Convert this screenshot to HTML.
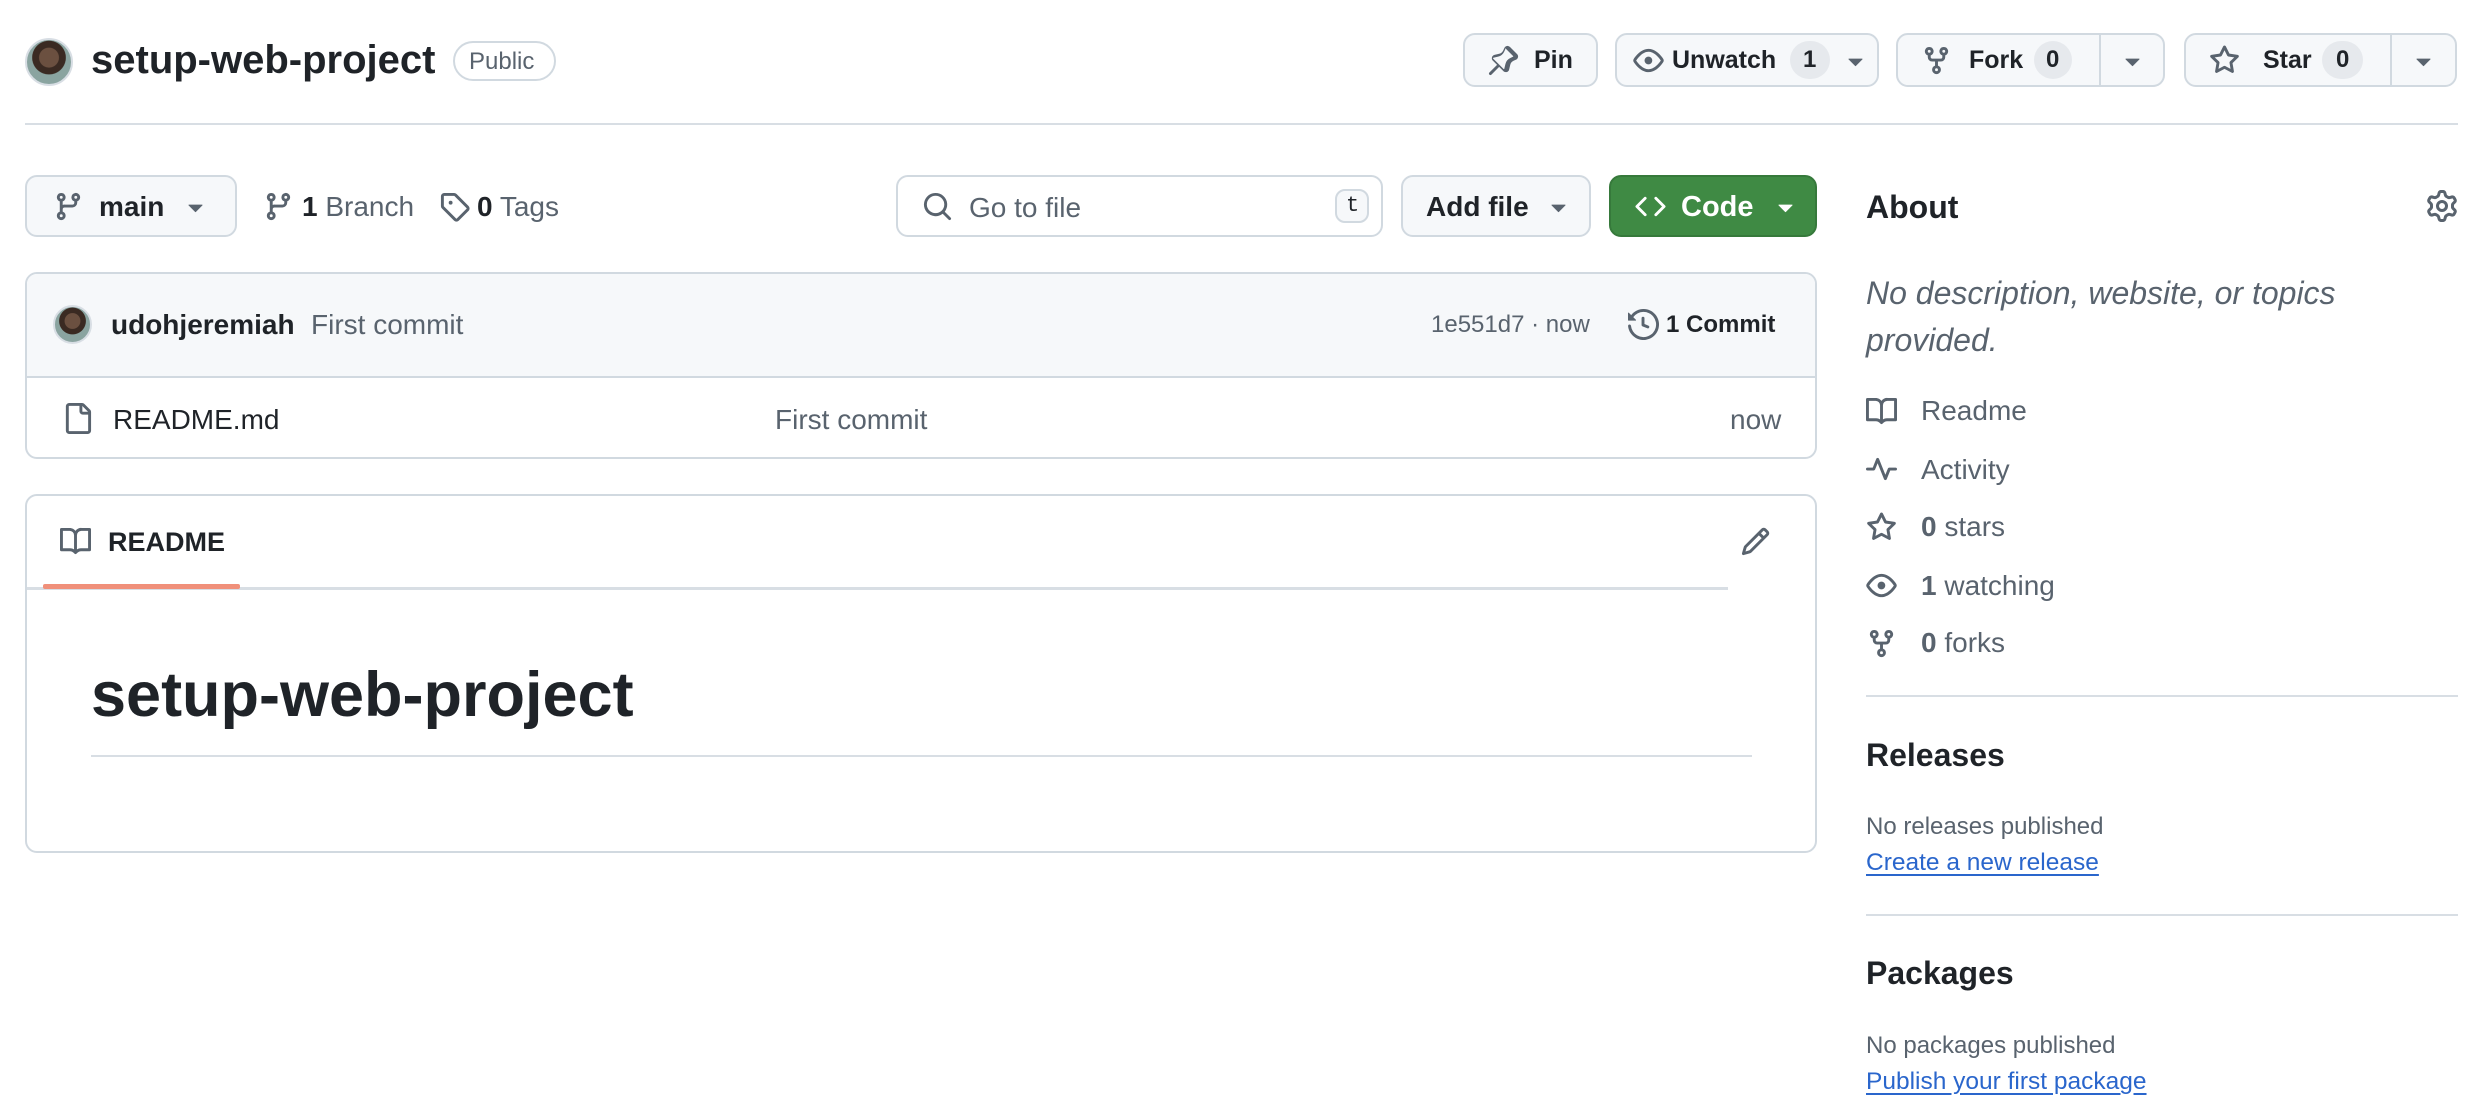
<!DOCTYPE html>
<html><head><meta charset="utf-8"><style>
*{box-sizing:border-box;margin:0;padding:0}
body{width:2490px;height:1118px;background:#fff;font-family:"Liberation Sans",Arial,sans-serif;color:#1f2328;position:relative;overflow:hidden}
.a{position:absolute}
.t{position:absolute;white-space:nowrap;line-height:1}
.btn{position:absolute;border:2px solid #d1d9e0;border-radius:12px;background:#f6f8fa}
svg.i{position:absolute;fill:#59636e}
.cnt{position:absolute;background:#e6e9ed;border-radius:20px;height:38px}
.hr{position:absolute;height:2px;background:#d8dee4}
.av{position:absolute;border-radius:50%;background:radial-gradient(circle at 50% 40%,#6b5040 0 28%,#3a2a22 30% 48%,#8aa4a0 50%);border:2px solid #d8dee4}
</style></head><body>

<div class="av" style="left:25px;top:38px;width:48px;height:48px"></div>
<div class="t" style="left:91px;top:40px;font-size:40px;font-weight:bold">setup-web-project</div>
<div class="a" style="left:453px;top:41px;width:103px;height:40px;border:2px solid #d1d9e0;border-radius:20px"></div>
<div class="t" style="left:469px;top:50px;font-size:24px;color:#59636e">Public</div>

<div class="btn" style="left:1463px;top:33px;width:135px;height:54px"></div>
<svg class="i" style="left:1488px;top:45px" width="31" height="31" viewBox="0 0 16 16"><path d="m11.294.984 3.722 3.722a1.75 1.75 0 0 1-.504 2.826l-1.327.613a3.089 3.089 0 0 0-1.707 2.084l-.584 2.454c-.317 1.332-1.972 1.8-2.94.832L5.750 11.311 1.78 15.28a.749.749 0 0 1-1.275-.326.749.749 0 0 1 .215-.734L4.69 10.25 2.487 8.047c-.968-.968-.5-2.623.832-2.94l2.454-.584a3.089 3.089 0 0 0 2.084-1.707l.613-1.327a1.75 1.75 0 0 1 2.824-.505Zm-2.35 1.17-.612 1.326a4.589 4.589 0 0 1-3.097 2.536l-2.454.584a.25.25 0 0 0-.119.42l5.33 5.33a.25.25 0 0 0 .42-.119l.584-2.454a4.589 4.589 0 0 1 2.536-3.097l1.326-.613a.25.25 0 0 0 .072-.404l-3.722-3.722a.25.25 0 0 0-.404.072Z"/></svg>
<div class="t" style="left:1534px;top:48px;font-size:25px;font-weight:bold">Pin</div>

<div class="btn" style="left:1615px;top:33px;width:264px;height:54px"></div>
<svg class="i" style="left:1633px;top:45px" width="31" height="31" viewBox="0 0 16 16"><path d="M8 2c1.981 0 3.671.992 4.933 2.078 1.27 1.091 2.187 2.345 2.637 3.023a1.62 1.62 0 0 1 0 1.798c-.45.678-1.367 1.932-2.637 3.023C11.67 13.008 9.981 14 8 14c-1.981 0-3.671-.992-4.933-2.078C1.797 10.83.88 9.576.43 8.898a1.62 1.62 0 0 1 0-1.798c.45-.677 1.367-1.931 2.637-3.022C4.33 2.992 6.019 2 8 2ZM1.679 7.932a.12.12 0 0 0 0 .136c.411.622 1.241 1.75 2.366 2.717C5.176 11.758 6.527 12.5 8 12.5c1.473 0 2.825-.742 3.955-1.715 1.124-.967 1.954-2.096 2.366-2.717a.12.12 0 0 0 0-.136c-.412-.621-1.242-1.75-2.366-2.717C10.824 4.242 9.473 3.5 8 3.5c-1.473 0-2.825.742-3.955 1.715-1.124.967-1.954 2.096-2.366 2.717ZM8 10a2 2 0 1 1-.001-3.999A2 2 0 0 1 8 10Z"/></svg>
<div class="t" style="left:1672px;top:48px;font-size:25px;font-weight:bold">Unwatch</div>
<div class="cnt" style="left:1790px;top:41px;width:40px"></div>
<div class="t" style="left:1803px;top:48px;font-size:24px;font-weight:bold">1</div>
<svg class="i" style="left:1840px;top:45px" width="31" height="31" viewBox="0 0 16 16"><path d="m4.427 7.427 3.396 3.396a.25.25 0 0 0 .354 0l3.396-3.396A.25.25 0 0 0 11.396 7H4.604a.25.25 0 0 0-.177.427Z"/></svg>

<div class="btn" style="left:1896px;top:33px;width:269px;height:54px"></div>
<div class="a" style="left:2099px;top:35px;width:2px;height:50px;background:#d1d9e0"></div>
<svg class="i" style="left:1921px;top:45px" width="31" height="31" viewBox="0 0 16 16"><path d="M5 5.372v.878c0 .414.336.75.75.75h4.5a.75.75 0 0 0 .75-.75v-.878a2.25 2.25 0 1 1 1.5 0v.878a2.25 2.25 0 0 1-2.25 2.25h-1.5v2.128a2.251 2.251 0 1 1-1.5 0V8.5h-1.5A2.25 2.25 0 0 1 3.5 6.25v-.878a2.25 2.25 0 1 1 1.5 0ZM5 3.25a.75.75 0 1 0-1.5 0 .75.75 0 0 0 1.5 0Zm6.75.75a.75.75 0 1 0 0-1.5.75.75 0 0 0 0 1.5Zm-3 8.75a.75.75 0 1 0-1.5 0 .75.75 0 0 0 1.5 0Z"/></svg>
<div class="t" style="left:1969px;top:48px;font-size:25px;font-weight:bold">Fork</div>
<div class="cnt" style="left:2034px;top:41px;width:38px"></div>
<div class="t" style="left:2046px;top:48px;font-size:24px;font-weight:bold">0</div>
<svg class="i" style="left:2117px;top:45px" width="31" height="31" viewBox="0 0 16 16"><path d="m4.427 7.427 3.396 3.396a.25.25 0 0 0 .354 0l3.396-3.396A.25.25 0 0 0 11.396 7H4.604a.25.25 0 0 0-.177.427Z"/></svg>

<div class="btn" style="left:2184px;top:33px;width:273px;height:54px"></div>
<div class="a" style="left:2390px;top:35px;width:2px;height:50px;background:#d1d9e0"></div>
<svg class="i" style="left:2209px;top:45px" width="31" height="31" viewBox="0 0 16 16"><path d="M8 .25a.75.75 0 0 1 .673.418l1.882 3.815 4.21.612a.75.75 0 0 1 .416 1.279l-3.046 2.97.719 4.192a.751.751 0 0 1-1.088.791L8 12.347l-3.766 1.98a.75.75 0 0 1-1.088-.79l.72-4.194L.818 6.374a.75.75 0 0 1 .416-1.28l4.21-.611L7.327.668A.75.75 0 0 1 8 .25Zm0 2.445L6.615 5.5a.75.75 0 0 1-.564.41l-3.097.45 2.24 2.184a.75.75 0 0 1 .216.664l-.528 3.084 2.769-1.456a.75.75 0 0 1 .698 0l2.77 1.456-.53-3.084a.75.75 0 0 1 .216-.664l2.24-2.183-3.096-.45a.75.75 0 0 1-.564-.41L8 2.694Z"/></svg>
<div class="t" style="left:2263px;top:48px;font-size:25px;font-weight:bold">Star</div>
<div class="cnt" style="left:2322px;top:41px;width:41px"></div>
<div class="t" style="left:2336px;top:48px;font-size:24px;font-weight:bold">0</div>
<svg class="i" style="left:2408px;top:45px" width="31" height="31" viewBox="0 0 16 16"><path d="m4.427 7.427 3.396 3.396a.25.25 0 0 0 .354 0l3.396-3.396A.25.25 0 0 0 11.396 7H4.604a.25.25 0 0 0-.177.427Z"/></svg>

<div class="hr" style="left:25px;top:123px;width:2433px"></div>

<div class="btn" style="left:25px;top:175px;width:212px;height:62px"></div>
<svg class="i" style="left:53px;top:191px" width="31" height="31" viewBox="0 0 16 16"><path d="M9.5 3.25a2.25 2.25 0 1 1 3 2.122V6A2.5 2.5 0 0 1 10 8.5H6a1 1 0 0 0-1 1v1.128a2.251 2.251 0 1 1-1.5 0V5.372a2.25 2.25 0 1 1 1.5 0v1.836A2.493 2.493 0 0 1 6 7h4a1 1 0 0 0 1-1v-.628A2.25 2.25 0 0 1 9.5 3.25Zm-6 0a.75.75 0 1 0 1.5 0 .75.75 0 0 0-1.5 0Zm8.25-.75a.75.75 0 1 0 0 1.5.75.75 0 0 0 0-1.5ZM4.25 12a.75.75 0 1 0 0 1.5.75.75 0 0 0 0-1.5Z"/></svg>
<div class="t" style="left:99px;top:193px;font-size:28px;font-weight:bold">main</div>
<svg class="i" style="left:180px;top:191px" width="31" height="31" viewBox="0 0 16 16"><path d="m4.427 7.427 3.396 3.396a.25.25 0 0 0 .354 0l3.396-3.396A.25.25 0 0 0 11.396 7H4.604a.25.25 0 0 0-.177.427Z"/></svg>

<svg class="i" style="left:263px;top:191px" width="31" height="31" viewBox="0 0 16 16"><path d="M9.5 3.25a2.25 2.25 0 1 1 3 2.122V6A2.5 2.5 0 0 1 10 8.5H6a1 1 0 0 0-1 1v1.128a2.251 2.251 0 1 1-1.5 0V5.372a2.25 2.25 0 1 1 1.5 0v1.836A2.493 2.493 0 0 1 6 7h4a1 1 0 0 0 1-1v-.628A2.25 2.25 0 0 1 9.5 3.25Zm-6 0a.75.75 0 1 0 1.5 0 .75.75 0 0 0-1.5 0Zm8.25-.75a.75.75 0 1 0 0 1.5.75.75 0 0 0 0-1.5ZM4.25 12a.75.75 0 1 0 0 1.5.75.75 0 0 0 0-1.5Z"/></svg>
<div class="t" style="left:302px;top:193px;font-size:28px;color:#59636e"><b style="color:#1f2328">1</b> Branch</div>
<svg class="i" style="left:439px;top:191px" width="31" height="31" viewBox="0 0 16 16"><path d="M1 7.775V2.75C1 1.784 1.784 1 2.75 1h5.025c.464 0 .91.184 1.238.513l6.25 6.25a1.75 1.75 0 0 1 0 2.474l-5.026 5.026a1.75 1.75 0 0 1-2.474 0l-6.25-6.25A1.752 1.752 0 0 1 1 7.775Zm1.5 0c0 .066.026.13.073.177l6.25 6.25a.25.25 0 0 0 .354 0l5.025-5.025a.25.25 0 0 0 0-.354l-6.25-6.25a.25.25 0 0 0-.177-.073H2.75a.25.25 0 0 0-.25.25ZM6 5a1 1 0 1 1 0 2 1 1 0 0 1 0-2Z"/></svg>
<div class="t" style="left:477px;top:193px;font-size:28px;color:#59636e"><b style="color:#1f2328">0</b> Tags</div>

<div class="a" style="left:896px;top:175px;width:487px;height:62px;border:2px solid #d1d9e0;border-radius:12px"></div>
<svg class="i" style="left:922px;top:191px" width="31" height="31" viewBox="0 0 16 16"><path d="M10.68 11.74a6 6 0 0 1-7.922-8.982 6 6 0 0 1 8.982 7.922l3.04 3.04a.749.749 0 0 1-.326 1.275.749.749 0 0 1-.734-.215ZM11.5 7a4.499 4.499 0 1 0-8.997 0A4.499 4.499 0 0 0 11.5 7Z"/></svg>
<div class="t" style="left:969px;top:194px;font-size:28px;color:#59636e">Go to file</div>
<div class="a" style="left:1335px;top:189px;width:34px;height:34px;border:2px solid #d1d9e0;border-radius:10px;background:#f6f8fa"></div>
<div class="t" style="left:1346px;top:195px;font-size:22px;font-family:'Liberation Mono',monospace;color:#1f2328">t</div>

<div class="btn" style="left:1401px;top:175px;width:190px;height:62px"></div>
<div class="t" style="left:1426px;top:193px;font-size:28px;font-weight:bold">Add file</div>
<svg class="i" style="left:1543px;top:191px" width="31" height="31" viewBox="0 0 16 16"><path d="m4.427 7.427 3.396 3.396a.25.25 0 0 0 .354 0l3.396-3.396A.25.25 0 0 0 11.396 7H4.604a.25.25 0 0 0-.177.427Z"/></svg>

<div class="a" style="left:1609px;top:175px;width:208px;height:62px;background:#3f8a44;border:2px solid #36793b;border-radius:12px"></div>
<svg class="i" style="left:1635px;top:191px;fill:#fff" width="31" height="31" viewBox="0 0 16 16"><path d="m11.28 3.22 4.25 4.25a.75.75 0 0 1 0 1.06l-4.25 4.25a.749.749 0 0 1-1.275-.326.749.749 0 0 1 .215-.734L13.94 8l-3.72-3.72a.749.749 0 0 1 .326-1.275.749.749 0 0 1 .734.215Zm-6.56 0a.751.751 0 0 1 1.042.018.751.751 0 0 1 .018 1.042L2.06 8l3.72 3.72a.749.749 0 0 1-.326 1.275.749.749 0 0 1-.734-.215L.47 8.53a.75.75 0 0 1 0-1.06Z"/></svg>
<div class="t" style="left:1681px;top:193px;font-size:29px;font-weight:bold;color:#fff">Code</div>
<svg class="i" style="left:1770px;top:191px;fill:#fff" width="31" height="31" viewBox="0 0 16 16"><path d="m4.427 7.427 3.396 3.396a.25.25 0 0 0 .354 0l3.396-3.396A.25.25 0 0 0 11.396 7H4.604a.25.25 0 0 0-.177.427Z"/></svg>

<div class="a" style="left:25px;top:272px;width:1792px;height:187px;border:2px solid #d1d9e0;border-radius:12px;overflow:hidden">
 <div style="height:104px;background:#f6f8fa;border-bottom:2px solid #d1d9e0"></div>
</div>
<div class="av" style="left:53px;top:305px;width:39px;height:39px"></div>
<div class="t" style="left:111px;top:311px;font-size:28px;font-weight:bold">udohjeremiah</div>
<div class="t" style="left:311px;top:311px;font-size:28px;color:#59636e">First commit</div>
<div class="t" style="left:1431px;top:313px;font-size:24px;color:#59636e">1e551d7 · now</div>
<svg class="i" style="left:1628px;top:309px" width="31" height="31" viewBox="0 0 16 16"><path d="m.427 1.927 1.215 1.215a8.002 8.002 0 1 1-1.6 5.685.75.75 0 1 1 1.493-.154 6.5 6.5 0 1 0 1.18-4.458l1.358 1.358A.25.25 0 0 1 3.896 6H.25A.25.25 0 0 1 0 5.75V2.104a.25.25 0 0 1 .427-.177ZM7.75 4a.75.75 0 0 1 .75.75v2.992l2.028.812a.75.75 0 0 1-.557 1.392l-2.5-1A.751.751 0 0 1 7 8.25v-3.5A.75.75 0 0 1 7.75 4Z"/></svg>
<div class="t" style="left:1666px;top:313px;font-size:24px;font-weight:bold">1 Commit</div>

<svg class="i" style="left:62px;top:403px" width="31" height="31" viewBox="0 0 16 16"><path d="M2 1.75C2 .784 2.784 0 3.75 0h6.586c.464 0 .909.184 1.237.513l2.914 2.914c.329.328.513.773.513 1.237v9.586A1.75 1.75 0 0 1 13.25 16h-9.5A1.75 1.75 0 0 1 2 14.25Zm1.75-.25a.25.25 0 0 0-.25.25v12.5c0 .138.112.25.25.25h9.5a.25.25 0 0 0 .25-.25V6h-2.75A1.75 1.75 0 0 1 9 4.25V1.5Zm6.75.062V4.25c0 .138.112.25.25.25h2.688l-.011-.013-2.914-2.914-.013-.011Z"/></svg>
<div class="t" style="left:113px;top:406px;font-size:28px">README.md</div>
<div class="t" style="left:775px;top:406px;font-size:28px;color:#59636e">First commit</div>
<div class="t" style="left:1730px;top:406px;font-size:28px;color:#59636e">now</div>

<div class="a" style="left:25px;top:494px;width:1792px;height:359px;border:2px solid #d1d9e0;border-radius:12px"></div>
<div class="a" style="left:27px;top:587px;width:1701px;height:3px;background:#d8dee4"></div>
<div class="a" style="left:43px;top:584px;width:197px;height:5px;background:#f0907a;border-radius:2px"></div>
<svg class="i" style="left:60px;top:526px" width="31" height="31" viewBox="0 0 16 16"><path d="M0 1.75A.75.75 0 0 1 .75 1h4.253c1.227 0 2.317.59 3 1.501A3.743 3.743 0 0 1 11.006 1h4.245a.75.75 0 0 1 .75.75v10.5a.75.75 0 0 1-.75.75h-4.507a2.25 2.25 0 0 0-1.591.659l-.622.621a.75.75 0 0 1-1.06 0l-.622-.621A2.25 2.25 0 0 0 5.258 13H.75a.75.75 0 0 1-.75-.75Zm7.251 10.324.004-5.073-.002-2.253A2.25 2.25 0 0 0 5.003 2.5H1.5v9h3.757a3.75 3.75 0 0 1 1.994.574ZM8.755 4.75l-.004 7.322a3.752 3.752 0 0 1 1.992-.572H14.5v-9h-3.495a2.25 2.25 0 0 0-2.25 2.25Z"/></svg>
<div class="t" style="left:108px;top:529px;font-size:27px;font-weight:bold">README</div>
<svg class="i" style="left:1740px;top:526px" width="31" height="31" viewBox="0 0 16 16"><path d="M11.013 1.427a1.75 1.75 0 0 1 2.474 0l1.086 1.086a1.75 1.75 0 0 1 0 2.474l-8.61 8.61c-.21.21-.47.364-.756.445l-3.251.93a.75.75 0 0 1-.927-.928l.929-3.25c.081-.286.235-.547.445-.758l8.61-8.61Zm.176 4.823L9.75 4.81l-6.286 6.287a.253.253 0 0 0-.064.108l-.558 1.953 1.953-.558a.253.253 0 0 0 .108-.064Zm1.238-3.763a.25.25 0 0 0-.354 0L10.811 3.75l1.439 1.44 1.263-1.263a.25.25 0 0 0 0-.354Z"/></svg>
<div class="t" style="left:91px;top:664px;font-size:63px;font-weight:bold">setup-web-project</div>
<div class="hr" style="left:91px;top:755px;width:1661px"></div>

<div class="t" style="left:1866px;top:191px;font-size:32px;font-weight:bold">About</div>
<svg class="i" style="left:2426px;top:190px" width="32" height="32" viewBox="0 0 16 16"><path d="M8 0a8.2 8.2 0 0 1 .701.031C9.444.095 9.99.645 10.16 1.29l.288 1.107c.018.066.079.158.212.224.231.114.454.243.668.386.123.082.233.09.299.071l1.103-.303c.644-.176 1.392.021 1.820.63.27.385.506.792.704 1.218.315.675.111 1.422-.364 1.891l-.814.806c-.049.048-.098.147-.088.294.016.257.016.515 0 .772-.01.147.038.246.088.294l.814.806c.475.469.679 1.216.364 1.891a7.977 7.977 0 0 1-.704 1.217c-.428.61-1.176.807-1.82.63l-1.102-.302c-.067-.019-.177-.011-.3.071a5.909 5.909 0 0 1-.668.386c-.133.066-.194.158-.211.224l-.29 1.106c-.168.646-.715 1.196-1.458 1.26a8.006 8.006 0 0 1-1.402 0c-.743-.064-1.289-.614-1.458-1.26l-.289-1.106c-.018-.066-.079-.158-.212-.224a5.738 5.738 0 0 1-.668-.386c-.123-.082-.233-.09-.299-.071l-1.103.303c-.644.176-1.392-.021-1.82-.63a8.12 8.12 0 0 1-.704-1.218c-.315-.675-.111-1.422.363-1.891l.815-.806c.05-.048.098-.147.088-.294a6.214 6.214 0 0 1 0-.772c.01-.147-.038-.246-.088-.294l-.815-.806C.635 6.045.431 5.298.746 4.623a7.92 7.92 0 0 1 .704-1.217c.428-.61 1.176-.807 1.82-.63l1.102.302c.067.019.177.011.3-.071.214-.143.437-.272.668-.386.133-.066.194-.158.211-.224l.29-1.106C6.009.645 6.556.095 7.299.03 7.53.01 7.764 0 8 0Zm-.571 1.525c-.036.003-.108.036-.137.146l-.289 1.105c-.147.561-.549.967-.998 1.189-.173.086-.34.183-.5.29-.417.278-.97.423-1.529.27l-1.103-.303c-.109-.03-.175.016-.195.045-.22.312-.412.644-.573.99-.014.031-.021.11.059.19l.815.806c.411.406.562.957.53 1.456a4.709 4.709 0 0 0 0 .582c.032.499-.119 1.05-.53 1.456l-.815.806c-.081.08-.073.159-.059.19.162.346.353.677.573.989.02.03.085.076.195.046l1.102-.303c.56-.153 1.113-.008 1.53.27.161.107.328.204.501.29.447.222.85.629.997 1.189l.289 1.105c.029.109.101.143.137.146a6.6 6.6 0 0 0 1.142 0c.036-.003.108-.036.137-.146l.289-1.105c.147-.561.549-.967.998-1.189.173-.086.34-.183.5-.29.417-.278.97-.423 1.529-.27l1.103.303c.109.029.175-.016.195-.045.22-.313.411-.644.573-.99.014-.031.021-.11-.059-.19l-.815-.806c-.411-.406-.562-.957-.53-1.456a4.709 4.709 0 0 0 0-.582c-.032-.499.119-1.05.53-1.456l.815-.806c.081-.08.073-.159.059-.19a6.464 6.464 0 0 0-.573-.989c-.02-.03-.085-.076-.195-.046l-1.102.303c-.56.153-1.113.008-1.53-.27a4.44 4.44 0 0 0-.501-.29c-.447-.222-.85-.629-.997-1.189l-.289-1.105c-.029-.11-.101-.143-.137-.146a6.6 6.6 0 0 0-1.142 0ZM11 8a3 3 0 1 1-6 0 3 3 0 0 1 6 0ZM9.5 8a1.5 1.5 0 1 0-3.001.001A1.5 1.5 0 0 0 9.5 8Z"/></svg>
<div class="t" style="left:1866px;top:270px;font-size:32px;font-style:italic;color:#59636e;line-height:47px;white-space:normal;width:570px">No description, website, or topics provided.</div>

<svg class="i" style="left:1866px;top:396px" width="31" height="31" viewBox="0 0 16 16"><path d="M0 1.75A.75.75 0 0 1 .75 1h4.253c1.227 0 2.317.59 3 1.501A3.743 3.743 0 0 1 11.006 1h4.245a.75.75 0 0 1 .75.75v10.5a.75.75 0 0 1-.75.75h-4.507a2.25 2.25 0 0 0-1.591.659l-.622.621a.75.75 0 0 1-1.06 0l-.622-.621A2.25 2.25 0 0 0 5.258 13H.75a.75.75 0 0 1-.75-.75Zm7.251 10.324.004-5.073-.002-2.253A2.25 2.25 0 0 0 5.003 2.5H1.5v9h3.757a3.75 3.75 0 0 1 1.994.574ZM8.755 4.75l-.004 7.322a3.752 3.752 0 0 1 1.992-.572H14.5v-9h-3.495a2.25 2.25 0 0 0-2.25 2.25Z"/></svg>
<div class="t" style="left:1921px;top:397px;font-size:28px;color:#59636e">Readme</div>
<svg class="i" style="left:1866px;top:454px" width="31" height="31" viewBox="0 0 16 16"><path d="M6 2c.306 0 .582.187.696.471L10 10.731l1.304-3.26A.751.751 0 0 1 12 7h3.25a.75.75 0 0 1 0 1.5h-2.742l-1.812 4.528a.751.751 0 0 1-1.392 0L6 4.77 4.696 8.03A.75.75 0 0 1 4 8.5H.75a.75.75 0 0 1 0-1.5h2.742l1.812-4.529A.751.751 0 0 1 6 2Z"/></svg>
<div class="t" style="left:1921px;top:456px;font-size:28px;color:#59636e">Activity</div>
<svg class="i" style="left:1866px;top:512px" width="31" height="31" viewBox="0 0 16 16"><path d="M8 .25a.75.75 0 0 1 .673.418l1.882 3.815 4.21.612a.75.75 0 0 1 .416 1.279l-3.046 2.97.719 4.192a.751.751 0 0 1-1.088.791L8 12.347l-3.766 1.98a.75.75 0 0 1-1.088-.79l.72-4.194L.818 6.374a.75.75 0 0 1 .416-1.28l4.21-.611L7.327.668A.75.75 0 0 1 8 .25Zm0 2.445L6.615 5.5a.75.75 0 0 1-.564.41l-3.097.45 2.24 2.184a.75.75 0 0 1 .216.664l-.528 3.084 2.769-1.456a.75.75 0 0 1 .698 0l2.77 1.456-.53-3.084a.75.75 0 0 1 .216-.664l2.24-2.183-3.096-.45a.75.75 0 0 1-.564-.41L8 2.694Z"/></svg>
<div class="t" style="left:1921px;top:513px;font-size:28px;color:#59636e"><b>0</b> stars</div>
<svg class="i" style="left:1866px;top:570px" width="31" height="31" viewBox="0 0 16 16"><path d="M8 2c1.981 0 3.671.992 4.933 2.078 1.27 1.091 2.187 2.345 2.637 3.023a1.62 1.62 0 0 1 0 1.798c-.45.678-1.367 1.932-2.637 3.023C11.67 13.008 9.981 14 8 14c-1.981 0-3.671-.992-4.933-2.078C1.797 10.830.88 9.576.43 8.898a1.62 1.62 0 0 1 0-1.798c.45-.677 1.367-1.931 2.637-3.022C4.33 2.992 6.019 2 8 2ZM1.679 7.932a.12.12 0 0 0 0 .136c.411.622 1.241 1.75 2.366 2.717C5.176 11.758 6.527 12.5 8 12.5c1.473 0 2.825-.742 3.955-1.715 1.124-.967 1.954-2.096 2.366-2.717a.12.12 0 0 0 0-.136c-.412-.621-1.242-1.750-2.366-2.717C10.824 4.242 9.473 3.5 8 3.5c-1.473 0-2.825.742-3.955 1.715-1.124.967-1.954 2.096-2.366 2.717ZM8 10a2 2 0 1 1-.001-3.999A2 2 0 0 1 8 10Z"/></svg>
<div class="t" style="left:1921px;top:572px;font-size:28px;color:#59636e"><b>1</b> watching</div>
<svg class="i" style="left:1866px;top:628px" width="31" height="31" viewBox="0 0 16 16"><path d="M5 5.372v.878c0 .414.336.75.75.75h4.5a.75.75 0 0 0 .75-.75v-.878a2.25 2.25 0 1 1 1.5 0v.878a2.25 2.25 0 0 1-2.25 2.25h-1.5v2.128a2.251 2.251 0 1 1-1.5 0V8.5h-1.5A2.25 2.25 0 0 1 3.5 6.25v-.878a2.25 2.25 0 1 1 1.5 0ZM5 3.25a.75.75 0 1 0-1.5 0 .75.75 0 0 0 1.5 0Zm6.75.75a.75.75 0 1 0 0-1.5.75.75 0 0 0 0 1.5Zm-3 8.75a.75.75 0 1 0-1.5 0 .75.75 0 0 0 1.5 0Z"/></svg>
<div class="t" style="left:1921px;top:629px;font-size:28px;color:#59636e"><b>0</b> forks</div>

<div class="hr" style="left:1866px;top:695px;width:592px"></div>
<div class="t" style="left:1866px;top:739px;font-size:32px;font-weight:bold">Releases</div>
<div class="t" style="left:1866px;top:815px;font-size:24px;color:#59636e">No releases published</div>
<div class="t" style="left:1866px;top:851px;font-size:24.5px;color:#2a66cc;text-decoration:underline;text-underline-offset:4px">Create a new release</div>
<div class="hr" style="left:1866px;top:914px;width:592px"></div>
<div class="t" style="left:1866px;top:957px;font-size:32px;font-weight:bold">Packages</div>
<div class="t" style="left:1866px;top:1034px;font-size:24px;color:#59636e">No packages published</div>
<div class="t" style="left:1866px;top:1070px;font-size:24.5px;color:#2a66cc;text-decoration:underline;text-underline-offset:4px">Publish your first package</div>

</body></html>
